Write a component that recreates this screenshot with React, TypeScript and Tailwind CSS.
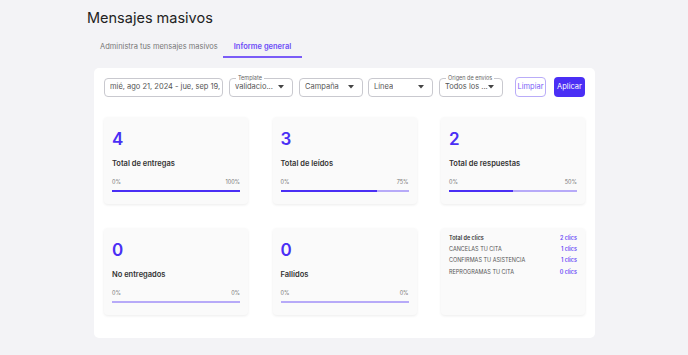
import React from "react";

const Caret = () => (
  <svg width="6" height="4" viewBox="0 0 6 4" className="shrink-0">
    <path d="M0 0 L6 0 L3 3.5 Z" fill="#444" />
  </svg>
);

function Select({ label, value, w }: { label?: string; value: string; w: string }) {
  return (
    <div className={`relative h-[19px] ${w} rounded-[4px] border border-[#c9c9cf] flex items-center justify-between pl-[5px] pr-[8px]`}>
      {label && (
        <span className="absolute -top-[5px] left-[6px] bg-white px-[2px] text-[5.5px] leading-[8px] text-[#666]">{label}</span>
      )}
      <span className="text-[7.5px] text-[#555] truncate">{value}</span>
      <Caret />
    </div>
  );
}

function StatCard({ n, label, right, pct }: { n: string; label: string; right: string; pct: number }) {
  return (
    <div className="h-[87px] rounded-[4px] bg-[#fafafa] shadow-[0_1px_3px_rgba(0,0,0,0.08)] px-[8px] pt-[12px]">
      <div className="text-[17px] leading-[20px] font-semibold text-[#4a2ff5]">{n}</div>
      <div className="mt-[10px] text-[7.5px] leading-[10px] font-semibold text-[#333]">{label}</div>
      <div className="mt-[10px] flex justify-between text-[5.5px] leading-[7px] text-[#777]">
        <span>0%</span>
        <span>{right}</span>
      </div>
      <div className="mt-[4px] h-[2px] w-full bg-[#b7aaf8]">
        <div className="h-full bg-[#4a2ff5]" style={{ width: `${pct}%` }} />
      </div>
    </div>
  );
}

export default function App() {
  return (
    <div className="w-[688px] h-[355px] bg-[#f3f3f6] overflow-hidden" style={{ fontFamily: "Inter, 'Noto Sans', sans-serif" }}>
      <div className="pl-[87px] pt-[9px]">
        <h1 className="text-[14.5px] leading-[18px] text-[#222]">Mensajes masivos</h1>
        <div className="mt-[15px] flex ml-[6px]">
          <div className="px-[7px] pb-[5px] text-[7.5px] leading-[10px] text-[#777]">Administra tus mensajes masivos</div>
          <div className="-ml-[2px] px-[11px] pb-[4px] text-[7.5px] leading-[10px] font-semibold text-[#6b4cf6] border-b-2 border-[#7a5cf7]">Informe general</div>
        </div>
      </div>
      <div className="ml-[94px] mt-[10px] w-[501px] h-[270px] bg-white rounded-[5px] px-[10px] pt-[9px]">
        <div className="flex items-center h-[20px]">
          <div className="h-[19px] w-[119px] rounded-[4px] border border-[#c9c9cf] flex items-center pl-[5px] pr-[2px] overflow-hidden">
            <span className="text-[7.5px] text-[#555] whitespace-nowrap overflow-hidden">mié, ago 21, 2024 - jue, sep 19, 20</span>
          </div>
          <div className="ml-[6px]"><Select label="Template" value="validacio..." w="w-[64px]" /></div>
          <div className="ml-[6px]"><Select value="Campaña" w="w-[64px]" /></div>
          <div className="ml-[5px]"><Select value="Línea" w="w-[65px]" /></div>
          <div className="ml-[6px]"><Select label="Origen de envíos" value="Todos los ..." w="w-[64px]" /></div>
          <button className="ml-[12px] h-[20px] w-[31px] rounded-[4px] border border-[#b9acf8] text-[7.5px] text-[#7b5ff7]">Limpiar</button>
          <button className="ml-[8px] h-[20px] w-[31px] rounded-[4px] bg-[#4a2ff5] text-[7.5px] text-white">Aplicar</button>
        </div>
        <div className="mt-[20px] grid grid-cols-[144px_144px_144px] justify-between gap-y-[24px]">
          <StatCard n="4" label="Total de entregas" right="100%" pct={100} />
          <StatCard n="3" label="Total de leídos" right="75%" pct={75} />
          <StatCard n="2" label="Total de respuestas" right="50%" pct={50} />
          <StatCard n="0" label="No entregados" right="0%" pct={0} />
          <StatCard n="0" label="Fallidos" right="0%" pct={0} />
          <div className="h-[87px] rounded-[4px] bg-[#fafafa] shadow-[0_1px_3px_rgba(0,0,0,0.08)] px-[8px] pt-[7px] text-[5.5px] leading-[7px]">
            <div className="flex justify-between">
              <span className="font-semibold text-[#333]">Total de clics</span>
              <span className="font-semibold text-[#6b4cf6]">2 clics</span>
            </div>
            <div className="mt-[4px] flex justify-between">
              <span className="text-[#555]">CANCELAS TU CITA</span>
              <span className="font-semibold text-[#6b4cf6]">1 clics</span>
            </div>
            <div className="mt-[4px] flex justify-between">
              <span className="text-[#555]">CONFIRMAS TU ASISTENCIA</span>
              <span className="font-semibold text-[#6b4cf6]">1 clics</span>
            </div>
            <div className="mt-[5px] flex justify-between">
              <span className="text-[#555]">REPROGRAMAS TU CITA</span>
              <span className="font-semibold text-[#6b4cf6]">0 clics</span>
            </div>
          </div>
        </div>
      </div>
    </div>
  );
}
